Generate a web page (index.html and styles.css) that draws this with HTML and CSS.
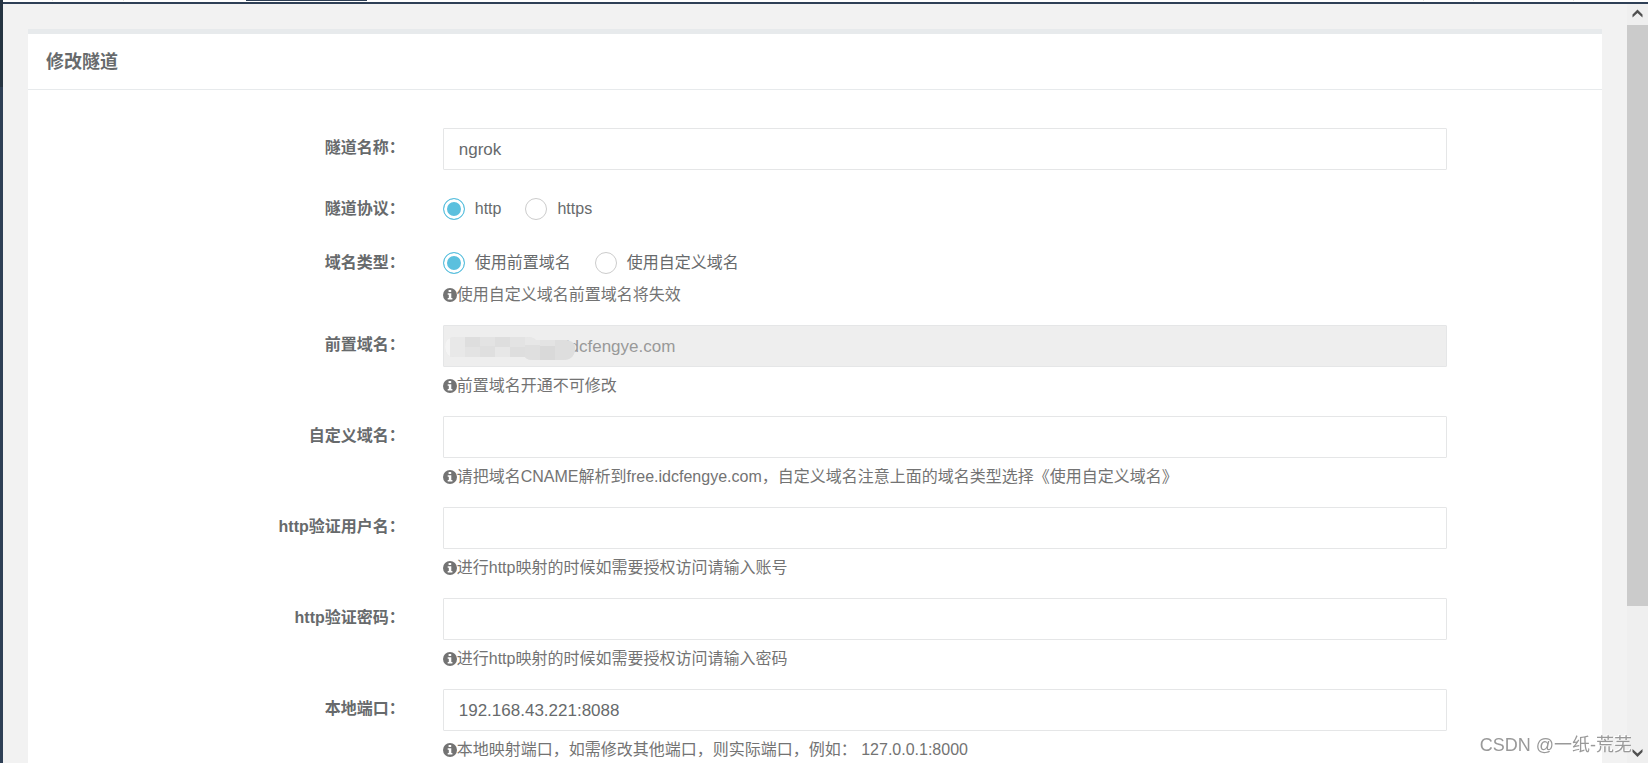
FILE: index.html
```html
<!DOCTYPE html>
<html lang="zh-CN">
<head>
<meta charset="utf-8">
<title>修改隧道</title>
<link rel="stylesheet" href="styles.css">
</head>
<body>
<svg width="0" height="0" class="defs" aria-hidden="true">
  <symbol id="info" viewBox="0 0 14 14">
    <circle cx="7" cy="7" r="7" fill="currentColor"/>
    <path d="M5.6 1.9h2.6v2H5.6zM4.7 5.2h3.6v4.7h1.1v1.5H4.7V9.9h1.1V6.7H4.7z" fill="#fff"/>
  </symbol>
</svg>
<div class="app">
  <div class="sidebar"></div>
  <div class="frame">
    <div class="tabs">
      <span class="tab tab-sm"></span>
      <span class="tab tab-md"></span>
      <span class="tab tab-active"></span>
      <span class="tab tab-fill"></span>
      <span class="tab tab-sm"></span>
      <span class="tab tab-lg"></span>
      <span class="tab-end"></span>
    </div>
    <div class="view">
      <main class="content">
        <section class="panel">
          <h1 class="panel-title">修改隧道</h1>
          <form class="form">
            <div class="row">
              <label class="label" for="name">隧道名称：</label>
              <div class="field"><input class="input" id="name" type="text" value="ngrok"></div>
            </div>
            <div class="row row-radio" role="radiogroup" aria-labelledby="protocol">
              <span class="label" id="protocol">隧道协议：</span>
              <div class="field">
                <div class="radios">
                  <label class="option"><input class="radio" type="radio" name="protocol" checked>http</label>
                  <label class="option"><input class="radio" type="radio" name="protocol">https</label>
                </div>
              </div>
            </div>
            <div class="row row-radio" role="radiogroup" aria-labelledby="domain-type">
              <span class="label" id="domain-type">域名类型：</span>
              <div class="field">
                <div class="radios">
                  <label class="option"><input class="radio" type="radio" name="domain" checked>使用前置域名</label>
                  <label class="option"><input class="radio" type="radio" name="domain">使用自定义域名</label>
                </div>
                <p class="help"><svg class="info"><use href="#info"/></svg>使用自定义域名前置域名将失效</p>
              </div>
            </div>
            <div class="row">
              <label class="label" for="prefix">前置域名：</label>
              <div class="field">
                <div class="masked">
                  <input class="input input-masked" id="prefix" type="text" value="idcfengye.com" disabled>
                  <svg class="mask" viewBox="0 0 130 24" aria-hidden="true">
                    <clipPath id="blob"><path d="M10 0H82Q88 0 91 3H118Q130 3 130 11Q130 23 118 23H88Q82 23 80 20H10Q0 20 0 10Q0 0 10 0z"/></clipPath>
                    <g clip-path="url(#blob)">
                      <path d="M0 0h130v24H0z" fill="#e3e3e3"/>
                      <path d="M0 0h5v24H0z" fill="#f4f4f4"/>
                      <path d="M5 0h15v24H5z" fill="#e8e8e8"/>
                      <path d="M20 0h15v10H20zM50 0h15v10H50zM65 10h15v10H65z" fill="#dedede"/>
                      <path d="M35 9h15v11H35zM80 8h15v16H80z" fill="#dfdfdf"/>
                      <path d="M50 10h15v10H50zM80 0h15v8H80z" fill="#e7e7e7"/>
                      <path d="M95 9h15v15H95z" fill="#d9d9d9"/>
                      <path d="M110 0h20v24h-20z" fill="#dedede"/>
                    </g>
                  </svg>
                </div>
                <p class="help"><svg class="info"><use href="#info"/></svg>前置域名开通不可修改</p>
              </div>
            </div>
            <div class="row">
              <label class="label" for="custom">自定义域名：</label>
              <div class="field">
                <input class="input" id="custom" type="text">
                <p class="help"><svg class="info"><use href="#info"/></svg>请把域名CNAME解析到free.idcfengye.com，自定义域名注意上面的域名类型选择《使用自定义域名》</p>
              </div>
            </div>
            <div class="row">
              <label class="label" for="user">http验证用户名：</label>
              <div class="field">
                <input class="input" id="user" type="text">
                <p class="help"><svg class="info"><use href="#info"/></svg>进行http映射的时候如需要授权访问请输入账号</p>
              </div>
            </div>
            <div class="row">
              <label class="label" for="pass">http验证密码：</label>
              <div class="field">
                <input class="input" id="pass" type="text">
                <p class="help"><svg class="info"><use href="#info"/></svg>进行http映射的时候如需要授权访问请输入密码</p>
              </div>
            </div>
            <div class="row">
              <label class="label" for="port">本地端口：</label>
              <div class="field">
                <input class="input" id="port" type="text" value="192.168.43.221:8088">
                <p class="help"><svg class="info"><use href="#info"/></svg>本地映射端口，如需修改其他端口，则实际端口，例如： 127.0.0.1:8000</p>
              </div>
            </div>
          </form>
        </section>
      </main>
      <div class="scrollbar" aria-hidden="true">
        <svg class="arrow" viewBox="0 0 21 21"><path d="M5.500 13.500v-3L10.500 5.500l5 5v3l-5-4.500z" fill="#505050"/></svg>
        <div class="track"><div class="thumb"></div></div>
        <svg class="arrow" viewBox="0 0 21 21"><path d="M5.500 7v3l5 5 5-5V7l-5 4.500z" fill="#505050"/></svg>
      </div>
    </div>
  </div>
</div>
<div class="watermark">CSDN @一纸-荒芜</div>
</body>
</html>
```
FILE: styles.css
```css
* {
  box-sizing: border-box;
}

body {
  margin: 0;
  overflow: hidden;
  background: #f2f2f2;
  color: #676a6c;
  font: 16px/24px "Liberation Sans", "Noto Sans CJK SC", sans-serif;
}

.defs {
  position: absolute;
}

.app {
  display: flex;
  height: 100vh;
}

.sidebar {
  flex: none;
  width: 3px;
  background: linear-gradient(#263442 87px, #2f4056 87px);
}

.frame {
  flex: 1;
  min-width: 0;
  display: flex;
  flex-direction: column;
}

.tabs {
  flex: none;
  display: flex;
  height: 4px;
  background: #fff;
  border-bottom: 2px solid #2f4056;
}

.tab {
  height: 1px;
  border-right: 1px solid #e6e6e6;
}

.tab-sm {
  width: 50px;
}

.tab-md {
  width: 71px;
}

.tab-active {
  width: 121px;
  margin-left: 122px;
  border: 0;
  background: #2f4056;
}

.tab-fill {
  flex: 1;
}

.tab-lg {
  width: 100px;
}

.tab-end {
  width: 74px;
}

.view {
  flex: 1;
  min-height: 0;
  display: flex;
}

.content {
  flex: 1;
  min-width: 0;
  overflow: hidden;
  padding: 25px 25px 0;
}

.panel {
  background: #fff;
  border-top: 5px solid #e7eaec;
}

.panel-title {
  margin: 0;
  padding: 16px 18px 15px;
  border-bottom: 1px solid #e7eaec;
  font-size: 18px;
  line-height: 24px;
}

.form {
  padding: 38px 6px 38px 5px;
}

.row {
  display: grid;
  grid-template-columns: 3fr 8fr 1fr;
  margin-bottom: 18px;
}

.label {
  padding: 8px 19px 0;
  text-align: right;
  font-weight: bold;
}

.row-radio .label {
  padding-top: 9px;
}

.row-radio + .row-radio {
  margin-top: 21px;
}

.field {
  padding: 0 19px;
}

.input {
  display: block;
  width: 100%;
  height: 42px;
  padding: 1px 15px 0;
  border: 1px solid #e5e6e7;
  border-radius: 1px;
  background: #fff;
  color: #676a6c;
  font: inherit;
  font-size: 17px;
}

.masked {
  position: relative;
}

.input-masked {
  padding-left: 122px;
  background: #eee;
  color: #999;
}

.mask {
  position: absolute;
  left: 2px;
  top: 12px;
  width: 130px;
  height: 24px;
}

.radios {
  display: flex;
  gap: 24px;
  padding-top: 9px;
}

.option {
  display: flex;
  align-items: center;
  gap: 10px;
  height: 24px;
}

.radio {
  appearance: none;
  width: 22px;
  height: 22px;
  margin: 0;
  border: 1px solid #ccc;
  border-radius: 50%;
  background: #fff;
}

.radio:checked {
  border-color: #5bc0de;
  background: #5bc0de;
  box-shadow: inset 0 0 0 3px #fff;
}

.help {
  display: flex;
  align-items: center;
  margin: 7px 0 0;
  color: #737373;
  white-space: pre;
}

.radios + .help {
  margin-top: 8px;
}

.info {
  flex: none;
  width: 14px;
  height: 14px;
}

.scrollbar {
  flex: none;
  display: flex;
  flex-direction: column;
  width: 21px;
  background: #efefef;
}

.arrow {
  flex: none;
  width: 21px;
  height: 21px;
}

.track {
  flex: 1;
}

.thumb {
  height: 81%;
  background: #cbcbcb;
}

.watermark {
  position: fixed;
  right: 16px;
  bottom: 6px;
  color: #999;
  font-size: 18px;
  text-shadow: -1px -1px 0 #fff;
}
```
